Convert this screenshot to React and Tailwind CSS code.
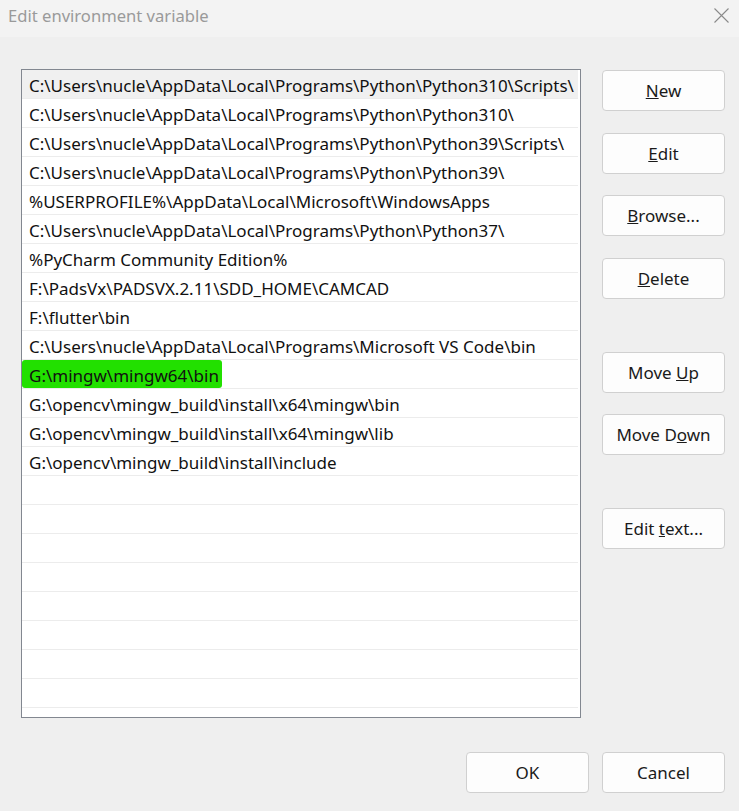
import React from "react";

const rows = [
  "C:\\Users\\nucle\\AppData\\Local\\Programs\\Python\\Python310\\Scripts\\",
  "C:\\Users\\nucle\\AppData\\Local\\Programs\\Python\\Python310\\",
  "C:\\Users\\nucle\\AppData\\Local\\Programs\\Python\\Python39\\Scripts\\",
  "C:\\Users\\nucle\\AppData\\Local\\Programs\\Python\\Python39\\",
  "%USERPROFILE%\\AppData\\Local\\Microsoft\\WindowsApps",
  "C:\\Users\\nucle\\AppData\\Local\\Programs\\Python\\Python37\\",
  "%PyCharm Community Edition%",
  "F:\\PadsVx\\PADSVX.2.11\\SDD_HOME\\CAMCAD",
  "F:\\flutter\\bin",
  "C:\\Users\\nucle\\AppData\\Local\\Programs\\Microsoft VS Code\\bin",
  "G:\\mingw\\mingw64\\bin",
  "G:\\opencv\\mingw_build\\install\\x64\\mingw\\bin",
  "G:\\opencv\\mingw_build\\install\\x64\\mingw\\lib",
  "G:\\opencv\\mingw_build\\install\\include",
];

const allRows = [...rows, ...Array(22 - rows.length).fill("")];

function Btn({ children, className = "" }) {
  return (
    <div
      className={`w-[123px] h-[41px] flex items-center justify-center rounded-[4px] border border-[#d0d0d0] bg-[#fdfdfd] text-[17px] text-[#1a1a1a] ${className}`}
    >
      {children}
    </div>
  );
}

export default function App() {
  return (
    <div
      className="w-[739px] h-[811px] bg-[#efefef] flex flex-col overflow-hidden"
      style={{ fontFamily: '"Noto Sans", "Open Sans", sans-serif' }}
    >
      <div className="h-[37px] bg-[#f3f3f3] flex items-center justify-between pl-[8px] pr-[10px]">
        <span className="text-[16.6px] text-[#9a9a9a] -mt-[5px]">Edit environment variable</span>
        <svg width="15" height="15" viewBox="0 0 15 15" className="-mt-[6px]">
          <path d="M0.5 0.5 L14.5 14.5 M14.5 0.5 L0.5 14.5" stroke="#8a8a8a" strokeWidth="1.1" />
        </svg>
      </div>
      <div className="flex pt-[32px] pl-[21px]">
        <div className="w-[560px] h-[649px] border border-[#828790] bg-white flex flex-col overflow-hidden">
          {allRows.map((r, i) => {
            const isGreen = r === "G:\\mingw\\mingw64\\bin";
            return (
              <div
                key={i}
                className={`h-[29px] shrink-0 mr-[2px] flex items-center border-b border-[#ececec] ${
                  i === 0 ? "bg-[#f0f0f0]" : ""
                }`}
              >
                {isGreen ? (
                  <span className="pl-[7px] pr-[3px] pt-[3px] h-[28px] flex items-center bg-[#22e000] rounded-[3px] text-[17px] text-[#111] whitespace-nowrap">
                    {r}
                  </span>
                ) : (
                  <span className="pl-[7px] mt-[4px] text-[17px] text-[#111] whitespace-nowrap">{r}</span>
                )}
              </div>
            );
          })}
        </div>
        <div className="ml-[21px] flex flex-col">
          <Btn className="mt-[1px]"><span><u>N</u>ew</span></Btn>
          <Btn className="mt-[22px]"><span><u>E</u>dit</span></Btn>
          <Btn className="mt-[21px]"><span><u>B</u>rowse...</span></Btn>
          <Btn className="mt-[22px]"><span><u>D</u>elete</span></Btn>
          <Btn className="mt-[53px]"><span>Move <u>U</u>p</span></Btn>
          <Btn className="mt-[21px]"><span>Move D<u>o</u>wn</span></Btn>
          <Btn className="mt-[53px]"><span>Edit <u>t</u>ext...</span></Btn>
        </div>
      </div>
      <div className="flex justify-end gap-[13px] pr-[14px] mt-[34px]">
        <Btn>OK</Btn>
        <Btn>Cancel</Btn>
      </div>
    </div>
  );
}
